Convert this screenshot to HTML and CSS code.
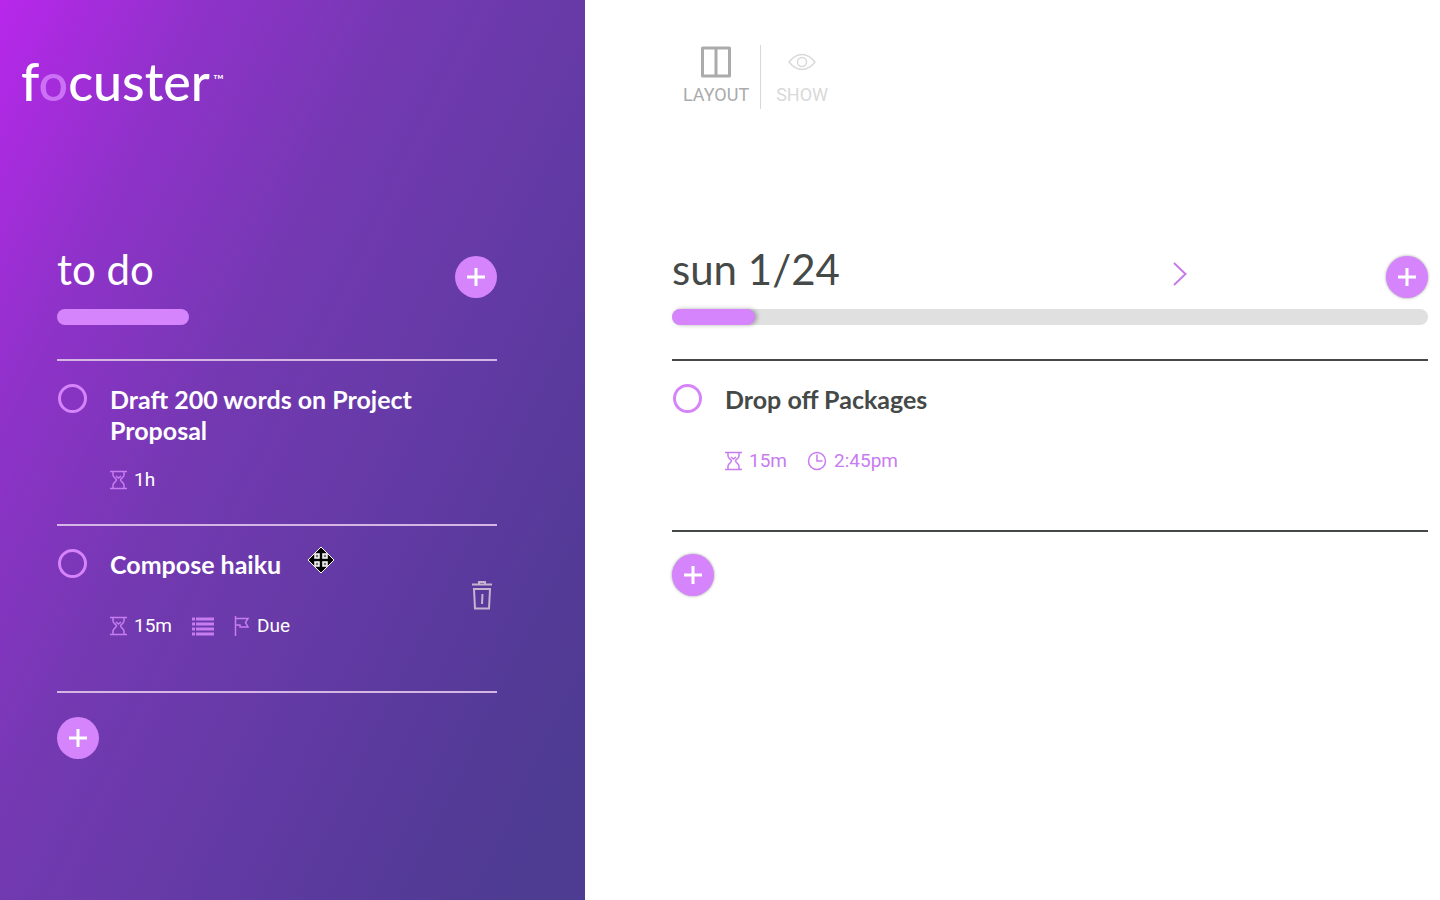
FILE: index.html
```html
<!doctype html>
<html lang="en">
  <head>
    <meta charset="utf-8">
    <meta name="viewport" content="width=device-width, initial-scale=1">
    <title>Focuster</title>
    <link rel="stylesheet" href="styles.css">
  </head>
  <body>
    <!-- Shared icons -->
    <svg class="sprite" aria-hidden="true">
      <symbol id="icon-plus" viewBox="0 0 20 20">
        <path d="M10 1v18M1 10h18" fill="none" stroke="currentColor" stroke-width="3"/>
      </symbol>
      <symbol id="icon-hourglass" viewBox="0 0 17 20">
        <path d="M0 1.500h17M0 18.500h17M3 2v3c0 2.500 3.500 3.500 3.500 5s-3.500 2.500-3.500 5v3M14 2v3c0 2.500-3.500 3.500-3.500 5s3.500 2.500 3.500 5v3M6 6l2.500 2 2.500-2" fill="none" stroke="currentColor" stroke-width="1.500"/>
      </symbol>
    </svg>

    <div class="app">
      <aside class="panel todo">
        <header class="top">
          <a class="logo" href="#">f<span class="logo-o">o</span>custer<sup>™</sup></a>
        </header>
        <main class="content">
          <div class="list-header">
            <h2>to do</h2>
            <button class="add" type="button" aria-label="Add task"><svg><use href="#icon-plus"/></svg></button>
          </div>
          <div class="bar">
            <div class="bar-fill" style="width: 30%;"></div>
          </div>
          <ul class="tasks">
            <li class="task">
              <input class="check" type="checkbox" id="task-draft">
              <div class="task-body">
                <label for="task-draft">Draft 200 words on Project Proposal</label>
                <div class="meta">
                  <span class="meta-item"><svg class="hourglass"><use href="#icon-hourglass"/></svg>1h</span>
                </div>
              </div>
            </li>
            <li class="task">
              <input class="check" type="checkbox" id="task-haiku">
              <div class="task-body">
                <label for="task-haiku">Compose haiku</label>
                <div class="meta">
                  <span class="meta-item"><svg class="hourglass"><use href="#icon-hourglass"/></svg>15m</span>
                  <span class="meta-item">
                    <svg class="notes" viewBox="0 0 22 20">
                      <path d="M0 3h3M0 8h3M0 13h3M0 18h3M4 3h18M4 8h18M4 13h18M4 18h18" fill="none" stroke="currentColor" stroke-width="3"/>
                    </svg>
                  </span>
                  <span class="meta-item">
                    <svg class="flag" viewBox="0 0 16 20">
                      <path d="M1.500 0v20M2 2.500h12l-2.500 4 2.500 4.500H6V9H2" fill="none" stroke="currentColor" stroke-width="1.500"/>
                    </svg>Due
                  </span>
                </div>
              </div>
              <button class="delete" type="button" aria-label="Delete task">
                <svg viewBox="0 0 20 29">
                  <path d="M7 2.500V1h6v1.500M0 3.500h20" fill="none" stroke="currentColor" stroke-width="2"/>
                  <path d="M2 8h16l-1 19.500H3z" fill="none" stroke="currentColor" stroke-width="2"/>
                  <path d="M10.500 13l-.5 10" fill="none" stroke="currentColor" stroke-width="2"/>
                </svg>
              </button>
              <svg class="move" viewBox="0 0 28 28" aria-hidden="true">
                <path d="M14 1l13 13-13 13L1 14z" fill="#000" stroke="#fff" stroke-width="1" stroke-linejoin="round"/>
                <path d="M8 8h4v4H8zM16 8h4v4h-4zM8 16h4v4H8zM16 16h4v4h-4z" fill="#777" stroke="#fff" stroke-width="1.500"/>
              </svg>
            </li>
          </ul>
          <button class="add" type="button" aria-label="Add task"><svg><use href="#icon-plus"/></svg></button>
        </main>
      </aside>

      <section class="panel day">
        <header class="top">
          <nav class="tools">
            <button class="tool" type="button">
              <svg viewBox="0 0 32 32">
                <path d="M2.500 2h27v28h-27zM16 2v28" fill="none" stroke="currentColor" stroke-width="3" stroke-linejoin="round"/>
              </svg>
              LAYOUT
            </button>
            <button class="tool tool-show" type="button">
              <svg viewBox="0 0 32 32">
                <path d="M3 16Q9 8.500 16 8.500T29 16Q23 23.500 16 23.500T3 16z" fill="none" stroke="currentColor" stroke-width="1.500"/>
                <circle cx="16" cy="16" r="4.500" fill="none" stroke="currentColor" stroke-width="1.500"/>
              </svg>
              SHOW
            </button>
          </nav>
        </header>
        <div class="content">
          <div class="list-header">
            <h2>sun 1/24</h2>
            <button class="next" type="button" aria-label="Next day">
              <svg viewBox="0 0 14 24">
                <path d="M1 1l11.500 11L1 23" fill="none" stroke="currentColor" stroke-width="2"/>
              </svg>
            </button>
            <button class="add" type="button" aria-label="Add task"><svg><use href="#icon-plus"/></svg></button>
          </div>
          <div class="bar">
            <div class="bar-fill" style="width: 11%;"></div>
          </div>
          <ul class="tasks">
            <li class="task">
              <input class="check" type="checkbox" id="task-packages">
              <div class="task-body">
                <label for="task-packages">Drop off Packages</label>
                <div class="meta">
                  <span class="meta-item"><svg class="hourglass"><use href="#icon-hourglass"/></svg>15m</span>
                  <span class="meta-item">
                    <svg class="clock" viewBox="0 0 20 20">
                      <circle cx="10" cy="10" r="8.500" fill="none" stroke="currentColor" stroke-width="1.500"/>
                      <path d="M10 3.500V10h5.500" fill="none" stroke="currentColor" stroke-width="1.500"/>
                    </svg>2:45pm
                  </span>
                </div>
              </div>
            </li>
          </ul>
          <button class="add" type="button" aria-label="Add task"><svg><use href="#icon-plus"/></svg></button>
        </div>
      </section>
    </div>
  </body>
</html>
```
FILE: styles.css
```css
* {
  box-sizing: border-box;
}

body {
  margin: 0;
  font-family: Roboto, "Liberation Sans", sans-serif;
  font-size: 19px;
  color: #454948;
  background: #fff;
}

button {
  padding: 0;
  border: none;
  background: none;
  font: inherit;
  color: inherit;
  cursor: pointer;
}

svg {
  display: block;
}

.sprite {
  display: none;
}

.app {
  display: grid;
  grid-template-columns: 13fr 19fr;
  min-height: 100vh;
}

.todo {
  color: #fff;
  background: linear-gradient(116deg, #b827eb 0%, #8f32c9 20%, #7439b2 40%, #663aa7 58%, #593a9c 75%, #4e3b92 92%);
}

/* Top row */

.top {
  height: 240px;
}

.logo {
  display: inline-block;
  padding: 50px 0 0 21px;
  font-family: Lato, sans-serif;
  font-size: 52px;
  font-weight: 500;
  line-height: 62px;
  color: #fff;
  text-decoration: none;
}

.logo-o {
  color: #cc70f5;
}

.logo sup {
  margin-left: 3px;
  font-size: 14px;
  line-height: 0;
  vertical-align: 16px;
}

.tools {
  display: flex;
  padding: 45px 0 0 87px;
}

.tool {
  display: flex;
  flex-direction: column;
  align-items: center;
  gap: 5px;
  height: 64px;
  padding: 1px 11px 0;
  font-size: 18px;
  line-height: 24px;
  color: #ababab;
}

.tool svg {
  width: 32px;
  height: 32px;
}

.tool-show {
  padding: 1px 15px 0;
  border-left: 1px solid #d8d8d8;
  color: #d9d9d9;
}

/* Lists */

.content {
  padding: 0 88px 0 57px;
}

.day .content {
  padding: 0 12px 0 87px;
}

.list-header {
  display: flex;
  align-items: flex-end;
  height: 58px;
  margin-bottom: 11px;
}

h2 {
  margin: 0 auto 0 0;
  font-family: Lato, sans-serif;
  font-size: 42px;
  line-height: 58px;
  font-weight: 400;
}

.add {
  display: flex;
  align-items: center;
  justify-content: center;
  width: 42px;
  height: 42px;
  border-radius: 50%;
  color: #fff;
  background: #d584fb;
}

.add svg {
  width: 20px;
  height: 20px;
}

.day .add {
  box-shadow: 0 0 3px rgba(0, 0, 0, 0.4);
}

.next {
  display: flex;
  align-items: center;
  justify-content: center;
  width: 32px;
  height: 48px;
  margin-right: 190px;
  color: #c77be8;
}

.next svg {
  width: 14px;
  height: 24px;
}

.bar {
  height: 16px;
  margin-bottom: 34px;
  border-radius: 8px;
}

.day .bar {
  background: #e0e0e0;
}

.bar-fill {
  height: 100%;
  border-radius: 8px;
  background: #d584fb;
}

.day .bar-fill {
  box-shadow: 2px 0 4px rgba(0, 0, 0, 0.3);
}

.tasks {
  margin: 0 0 24px;
  padding: 0;
  list-style: none;
  border-top: 2px solid #d5b5e4;
}

.day .tasks {
  margin-bottom: 22px;
  border-color: #454948;
}

.task {
  position: relative;
  display: flex;
  align-items: flex-start;
  gap: 23px;
  padding: 23px 0 32px 1px;
  border-bottom: 2px solid #d5b5e4;
}

.task:last-child {
  min-height: 167px;
}

.day .task {
  min-height: 171px;
  border-color: #454948;
}

.check {
  appearance: none;
  flex: none;
  width: 29px;
  height: 29px;
  margin: 0;
  border: 3px solid #d584fb;
  border-radius: 50%;
}

.task-body {
  flex: 1;
}

.task label {
  display: block;
  min-height: 43px;
  font-family: Lato, sans-serif;
  font-size: 25px;
  line-height: 31px;
  font-weight: 700;
}

.meta {
  display: flex;
  gap: 20px;
  margin-top: 22px;
  line-height: 24px;
}

.meta-item {
  display: flex;
  align-items: center;
  gap: 7px;
}

.meta svg {
  height: 20px;
  color: #c77cf0;
}

.day .meta {
  color: #c77cf0;
}

.hourglass {
  width: 17px;
}

.notes {
  width: 22px;
}

.flag {
  width: 16px;
}

.clock {
  width: 20px;
}

.delete {
  width: 30px;
  margin-top: 32px;
  color: #c5b3d0;
}

.delete svg {
  width: 20px;
  height: 29px;
  margin: 0 auto;
}

/* Drag cursor over the task */
.move {
  position: absolute;
  top: 20px;
  left: 250px;
  width: 28px;
  height: 28px;
}
```
